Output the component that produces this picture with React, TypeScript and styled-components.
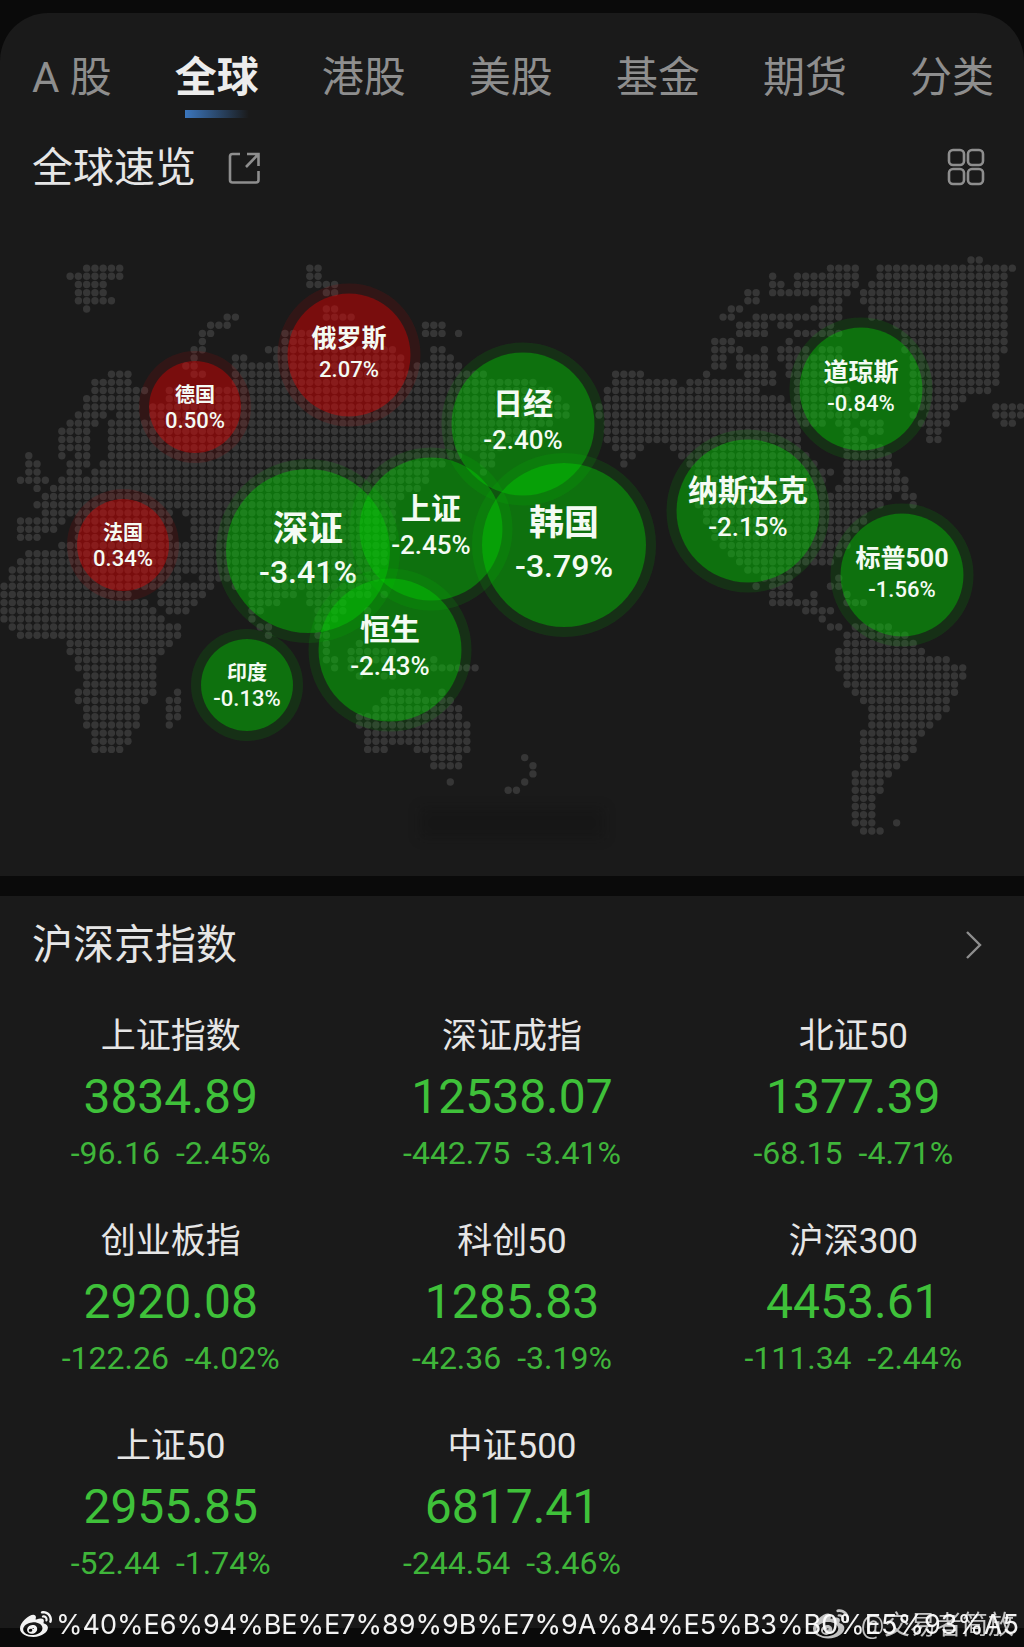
import React, { useState } from "react";
import styled, { createGlobalStyle, css } from "styled-components";
import { FaWeibo } from "react-icons/fa";

const GlobalStyle = createGlobalStyle`
  *, *::before, *::after { box-sizing: border-box; }
  body {
    margin: 0;
    background: #0a0a0a;
    color: #e6e6e6;
    font-family: Roboto, "Noto Sans CJK SC", sans-serif;
  }
`;

const Page = styled.div`
  position: relative;
  padding: 13px 0 19px;
`;

const Panel = styled.section<{ $rounded?: boolean }>`
  background: #1a1a1a;
  overflow: hidden;
  border-radius: ${(p) => (p.$rounded ? "48px 48px 0 0" : "0")};

  & + & {
    margin-top: 20px;
  }
`;

const Tabs = styled.nav`
  display: flex;
  justify-content: space-between;
  padding: 35px 30px 0 32px;
`;

const Tab = styled.button<{ $active: boolean }>`
  position: relative;
  border: 0;
  padding: 0 0 10px;
  background: none;
  font-family: inherit;
  font-size: 42px;
  line-height: 60px;
  white-space: nowrap;
  cursor: pointer;
  color: #8e8e8e;

  ${(p) =>
    p.$active &&
    css`
      color: #ececec;
      font-weight: 700;

      &::after {
        content: "";
        position: absolute;
        left: 10px;
        right: 10px;
        bottom: 0;
        height: 8px;
        background: linear-gradient(90deg, #3b76bd, rgba(59, 118, 189, 0));
      }
    `}
`;

const SectionHead = styled.header<{ $top: number }>`
  display: flex;
  align-items: center;
  padding: ${(p) => p.$top}px 38px 0 32px;
`;

const Title = styled.h2`
  margin: 0;
  font-size: 41px;
  font-weight: 400;
  line-height: 56px;
  color: #e6e6e6;
`;

const IconButton = styled.button<{ $end?: boolean }>`
  display: flex;
  border: 0;
  padding: 0;
  margin-left: ${(p) => (p.$end ? "auto" : "32px")};
  background: none;
  color: #8e8e8e;
  cursor: pointer;
`;

const MapArea = styled.div`
  position: relative;
  width: 100%;
  aspect-ratio: 1024 / 680;
`;

const DotMap = styled.svg`
  display: block;
  width: 100%;
  height: 100%;
`;

const Smudge = styled.div`
  position: absolute;
  left: 41%;
  top: 90%;
  width: 18%;
  height: 30px;
  background: rgba(10, 10, 10, 0.25);
  filter: blur(6px);
`;

type Size = "s" | "m" | "l" | "xl";

const sizes = {
  s: { box: 92, name: 20, value: 22, line: 26, pad: "2px 0 0" },
  m: { box: 123, name: 25, value: 22, line: 31, pad: "0 0 4px" },
  l: { box: 143, name: 30, value: 26, line: 36, pad: "0 0 6px" },
  xl: { box: 164, name: 35, value: 32, line: 42, pad: "0" },
};

const Bubble = styled.div<{ $size: Size; $up?: boolean }>`
  position: absolute;
  display: flex;
  flex-direction: column;
  align-items: center;
  justify-content: center;
  width: ${(p) => sizes[p.$size].box}px;
  height: ${(p) => sizes[p.$size].box}px;
  padding: ${(p) => sizes[p.$size].pad};
  border-radius: 50%;
  transform: translate(-50%, -50%);
  white-space: nowrap;
  color: #f4fbf4;
  line-height: ${(p) => sizes[p.$size].line}px;
  background: ${(p) => (p.$up ? "rgba(225, 0, 0, 0.48)" : "rgba(0, 215, 0, 0.46)")};
  box-shadow: 0 0 0 10px ${(p) => (p.$up ? "rgba(225, 0, 0, 0.12)" : "rgba(0, 215, 0, 0.12)")};
`;

const BubbleName = styled.span<{ $size: Size }>`
  font-size: ${(p) => sizes[p.$size].name}px;
  font-weight: 700;
`;

const BubbleValue = styled.span<{ $size: Size }>`
  font-size: ${(p) => sizes[p.$size].value}px;
  font-weight: 500;
`;

const IndexGrid = styled.ul`
  display: grid;
  grid-template-columns: repeat(3, 1fr);
  row-gap: 43px;
  margin: 0;
  padding: 39px 0 44px;
  list-style: none;
`;

const IndexItem = styled.li`
  display: flex;
  flex-direction: column;
  align-items: center;
`;

const IndexName = styled.span`
  font-size: 35px;
  line-height: 50px;
`;

const IndexValue = styled.span`
  font-size: 48px;
  line-height: 70px;
  color: #3fc13a;
`;

const IndexChange = styled.span`
  display: flex;
  gap: 16px;
  font-size: 32px;
  line-height: 42px;
  color: #3fb53a;
`;

const Watermark = styled.div<{ $right?: boolean }>`
  position: absolute;
  bottom: 4px;
  ${(p) => (p.$right ? "right: 10px;" : "left: 20px;")}
  display: flex;
  align-items: center;
  gap: ${(p) => (p.$right ? 12 : 4)}px;
  font-family: ${(p) => (p.$right ? "" : "Inter, ")}Roboto, "Noto Sans CJK SC", sans-serif;
  font-size: ${(p) => (p.$right ? 26 : 27)}px;
  line-height: 36px;
  white-space: nowrap;
  color: #fff;
  opacity: ${(p) => (p.$right ? 0.75 : 0.95)};
`;

/* Land cells of the world map: one entry per row, inclusive column runs. */
const land = [
  "117-118",
  "10-14 37-38 100-103 106-122",
  "8-14 37-38 93 96-103 106-121",
  "9-12 37-40 93-94 96-103 105-121",
  "9-12 39-40 90-91 93-102 104-121",
  "9-13 90-91 99-101 104-121",
  "10 39-40 88-89 98-101 105-121",
  "27-28 39-42 87-88 91-101 105-121",
  "25-27 51-53 89-92 94-95 99-100 108-121",
  "24-25 34-38 51-53 55 89-92 96-101 109-121",
  "24 34-40 86-88 95 109-121",
  "23-24 32-47 52-53 86-89 92 94-97 99-101 109-121",
  "23 28-29 33-48 52-54 86-87 89-92 94-101 110-120",
  "22-23 28-48 50-55 86-87 89-92 95-101 110-120",
  "13-15 23-24 28-58 74-77 85 90-93 95-101 110-120",
  "11-15 28-64 74-81 83-93 96-100 110-120",
  "11-17 20-22 25-66 73-91 96-102 110-119",
  "10-16 20-67 73-94 96-102 110-116",
  "10-16 18-68 72-102 111-115 120-123",
  "9-12 14-16 18-68 72-103 110 112-114 120-123",
  "8-11 13-66 73-99 101-102 104-106 111-114 121-122",
  "7-10 13-64 73-96 102-103 105-106 112-113",
  "7-10 13-62 73-96 102-104 112-113",
  "7-10 13-60 74-77 81-96 102-106",
  "3 7 9-10 13-55 58-59 75-76 82-97 102-107",
  "3-4 8-10 12-53 58-59 75 83-98 102-107",
  "3-4 8-9 11-51 58 84-100 102-108",
  "2-5 7-51 84-99 102-109",
  "4 6-50 84-99 101-109",
  "5-48 84-107 109-110",
  "4-47 84-106 110",
  "5-20 22-47 85-104",
  "2-7 9-20 23-47 85-104",
  "2-6 9-20 23-47 86-103",
  "2-4 9-20 23-47 86-102",
  "7-21 22-46 87-102",
  "3-46 88-101",
  "2-46 89-100",
  "1-45 90-96",
  "1-21 24-45 92-95 101",
  "0-25 28-44 91 93-95 100-101",
  "0-15 19-24 30-35 37-44 46 93-95 98 102",
  "0-17 19-23 30-33 37-41 93-98 102-104",
  "0-18 20-22 30-31 38-41 44 97-100",
  "0-19 30 38-40 99",
  "1-21 31-32 38-39 100-101 103-107",
  "2-21 32 38-39 102-109",
  "8-20 39 43 102-110",
  "8-19 39 42-47 101-111",
  "9-18 39-40 42-46 52 101-114",
  "9-18 40 42 51-57 101-116",
  "10-18 43 46-47 102-116",
  "10-18 102-115",
  "9-18 21 47-50 53 103-115",
  "9-17 20-21 46-54 104-114",
  "10-16 20-21 45-55 105-114",
  "10-16 20-21 43-55 105-113",
  "10-16 20 43-56 105-112",
  "11-15 44-56 104-111",
  "11-15 44-56 104-110",
  "11-14 44-46 50-56 104-110",
  "52-55 63 104-109",
  "52-55 64 104-108",
  "64 103-107",
  "54 63 103-106",
  "61-62 103-106",
  "103-105",
  "103-105",
  "103-105",
  "103-105 108",
  "104-106",
];

const dots = land.flatMap((row, r) =>
  row.split(" ").flatMap((run) => {
    const [from, to = from] = run.split("-").map(Number);
    return Array.from({ length: to - from + 1 }, (_, i) => ({ c: from + i, r }));
  })
);

const markets: { name: string; value: string; x: number; y: number; size: Size; up?: boolean }[] = [
  { name: "俄罗斯", value: "2.07%", x: 349, y: 159, size: "m", up: true },
  { name: "德国", value: "0.50%", x: 195, y: 211, size: "s", up: true },
  { name: "法国", value: "0.34%", x: 123, y: 349, size: "s", up: true },
  { name: "日经", value: "-2.40%", x: 523, y: 228, size: "l" },
  { name: "深证", value: "-3.41%", x: 308, y: 355, size: "xl" },
  { name: "上证", value: "-2.45%", x: 431, y: 333, size: "l" },
  { name: "韩国", value: "-3.79%", x: 564, y: 349, size: "xl" },
  { name: "恒生", value: "-2.43%", x: 390, y: 454, size: "l" },
  { name: "印度", value: "-0.13%", x: 247, y: 489, size: "s" },
  { name: "道琼斯", value: "-0.84%", x: 861, y: 193, size: "m" },
  { name: "纳斯达克", value: "-2.15%", x: 748, y: 315, size: "l" },
  { name: "标普500", value: "-1.56%", x: 902, y: 379, size: "m" },
];

const indices = [
  ["上证指数", "3834.89", "-96.16", "-2.45%"],
  ["深证成指", "12538.07", "-442.75", "-3.41%"],
  ["北证50", "1377.39", "-68.15", "-4.71%"],
  ["创业板指", "2920.08", "-122.26", "-4.02%"],
  ["科创50", "1285.83", "-42.36", "-3.19%"],
  ["沪深300", "4453.61", "-111.34", "-2.44%"],
  ["上证50", "2955.85", "-52.44", "-1.74%"],
  ["中证500", "6817.41", "-244.54", "-3.46%"],
];

const tabs = ["A 股", "全球", "港股", "美股", "基金", "期货", "分类"];

export default function App() {
  const [active, setActive] = useState("全球");

  return (
    <Page>
      <GlobalStyle />
      <Panel $rounded>
        <Tabs>
          {tabs.map((t) => (
            <Tab key={t} type="button" $active={t === active} onClick={() => setActive(t)}>
              {t}
            </Tab>
          ))}
        </Tabs>
        <SectionHead $top={22}>
          <Title>全球速览</Title>
          <IconButton type="button" aria-label="分享">
            <svg width="32" height="32" viewBox="0 0 32 32" fill="none" stroke="currentColor" strokeWidth="2.6">
              <path d="M12 2H4.500A2.500 2.500 0 0 0 2 4.500V28A2.500 2.500 0 0 0 4.500 30.500H28A2.500 2.500 0 0 0 30.500 28V19" />
              <path d="M19 2H30.500V14M30 2.500L18 15" />
            </svg>
          </IconButton>
          <IconButton type="button" aria-label="布局" $end>
            <svg width="40" height="40" viewBox="0 0 40 40" fill="none" stroke="currentColor" strokeWidth="2.6">
              <rect x="3" y="2" width="15" height="15" rx="4" />
              <rect x="22" y="2" width="15" height="15" rx="4" />
              <rect x="3" y="21" width="15" height="15" rx="4" />
              <rect x="22" y="21" width="15" height="15" rx="4" />
            </svg>
          </IconButton>
        </SectionHead>
        <MapArea>
          <DotMap viewBox="0 0 1024 680" aria-hidden="true">
            {dots.map(({ c, r }) => (
              <circle key={`${c}-${r}`} cx={4 + c * 8.265} cy={64 + r * 8.157} r={3.7} fill="#363636" />
            ))}
          </DotMap>
          <Smudge />
          {markets.map((m) => (
            <Bubble
              key={m.name}
              $size={m.size}
              $up={m.up}
              style={{ left: `${(m.x / 1024) * 100}%`, top: `${(m.y / 680) * 100}%` }}
            >
              <BubbleName $size={m.size}>{m.name}</BubbleName>
              <BubbleValue $size={m.size}>{m.value}</BubbleValue>
            </Bubble>
          ))}
        </MapArea>
      </Panel>

      <Panel>
        <SectionHead $top={21}>
          <Title>沪深京指数</Title>
          <IconButton type="button" aria-label="更多" $end>
            <svg width="24" height="32" viewBox="0 0 24 32" fill="none" stroke="currentColor" strokeWidth="2.4">
              <path d="M5 3L18 16L5 29" />
            </svg>
          </IconButton>
        </SectionHead>
        <IndexGrid>
          {indices.map(([name, value, diff, pct]) => (
            <IndexItem key={name}>
              <IndexName>{name}</IndexName>
              <IndexValue>{value}</IndexValue>
              <IndexChange>
                <span>{diff}</span>
                <span>{pct}</span>
              </IndexChange>
            </IndexItem>
          ))}
        </IndexGrid>
      </Panel>

      <Watermark>
        <FaWeibo size={32} />
        %40%E6%94%BE%E7%89%9B%E7%9A%84%E5%B3%B0%E5%93%A5
      </Watermark>
      <Watermark $right>
        <FaWeibo size={36} />
        @交易者简放
      </Watermark>
    </Page>
  );
}
